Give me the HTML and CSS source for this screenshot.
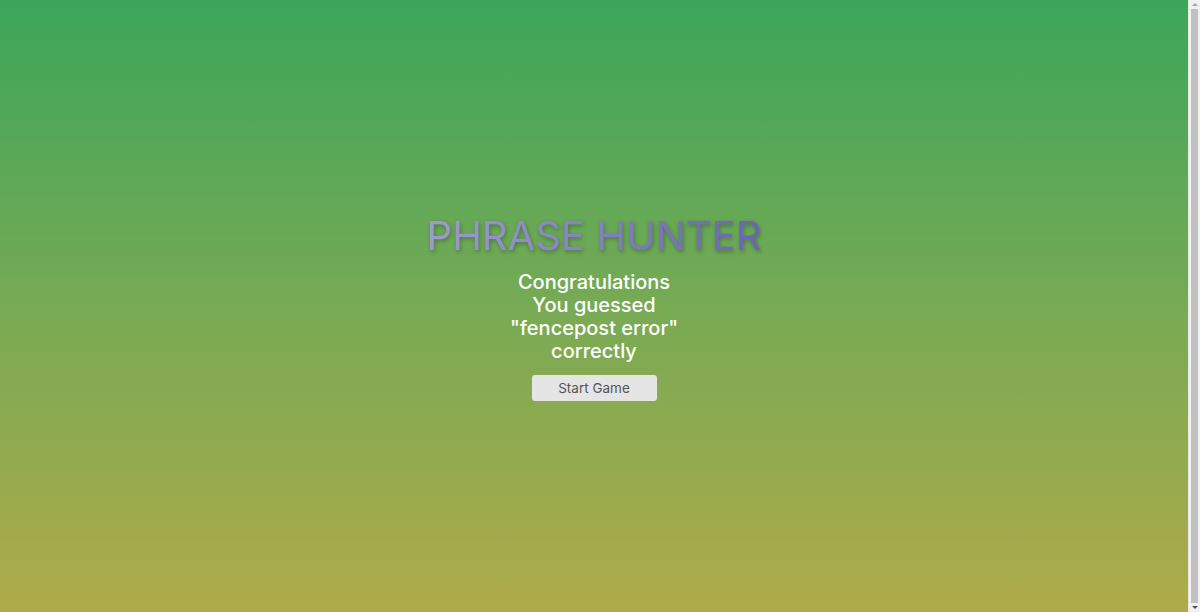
FILE: index.html
```
<!DOCTYPE html>
<html lang="en">
<head>
<meta charset="utf-8">
<title>Phrase Hunter</title>
<link rel="stylesheet" href="styles.css">
</head>
<body>
<div class="overlay">
  <h2 class="title">PHRASE HUNTER</h2>
  <h1 class="game-over-message">Congratulations<br>You guessed<br>"fencepost error"<br>correctly</h1>
  <button class="btn-reset">Start Game</button>
</div>
<div class="fake-scrollbar" aria-hidden="true">
  <span class="sb-arrow sb-up"></span>
  <span class="sb-thumb"></span>
  <span class="sb-arrow sb-down"></span>
</div>
</body>
</html>
```
FILE: styles.css
```
html {
  background: linear-gradient(180deg, #3ba65a 0%, #79aa54 50%, #b2ab48 100%);
  min-height: 100%;
}
body {
  margin: 8px 20px 8px 8px;
  font-family: Inter, "DejaVu Sans", sans-serif;
}
.overlay {
  min-height: 100vh;
  box-sizing: border-box;
  padding-bottom: 14px;
  display: flex;
  flex-direction: column;
  align-items: center;
  justify-content: center;
  text-align: center;
}
.title {
  margin: 0;
  font-size: 40px;
  font-weight: 400;
  line-height: 46px;
  background: linear-gradient(90deg, #9e9bcd 0%, #8581c3 50%, #6a63b5 100%);
  -webkit-background-clip: text;
  background-clip: text;
  color: transparent;
  filter: drop-shadow(1px 2px 2px rgba(40, 50, 40, 0.45));
}
.game-over-message {
  margin: 12px 0 0;
  color: #ffffff;
  font-size: 20px;
  font-weight: 500;
  line-height: 23px;
}
.btn-reset {
  margin-top: 12px;
  width: 125px;
  height: 26px;
  border: none;
  border-radius: 3px;
  background: #e5e5e5;
  color: #555;
  font-family: Inter, "DejaVu Sans", sans-serif;
  font-size: 13.5px;
  padding: 0;
  cursor: pointer;
}
.fake-scrollbar {
  position: fixed;
  top: 0;
  right: 0;
  width: 11px;
  height: 100vh;
  background: #f1f1f1;
  border-left: 1px solid #e8e8e8;
  display: flex;
  flex-direction: column;
  align-items: center;
}
.sb-arrow {
  width: 0;
  height: 0;
  border-left: 3px solid transparent;
  border-right: 3px solid transparent;
  margin: 3px 0;
}
.sb-up {
  border-bottom: 3px solid #a3a3a3;
}
.sb-down {
  border-top: 3px solid #505050;
}
.sb-thumb {
  flex: 1;
  width: 7px;
  background: #c1c1c1;
  margin: 0;
}
```
